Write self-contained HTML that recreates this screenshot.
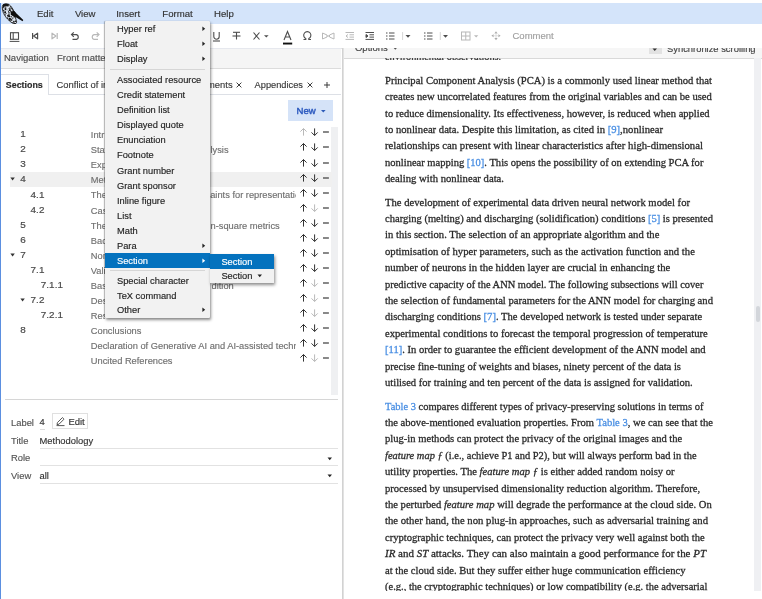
<!DOCTYPE html>
<html><head><meta charset="utf-8"><style>
html,body{margin:0;padding:0;width:762px;height:599px;overflow:hidden;background:#fff;position:relative}
body{will-change:transform}
.t{position:absolute;white-space:nowrap;font-family:'Liberation Sans', sans-serif;-webkit-text-stroke:0.15px currentColor}
.lk{color:#4a8fe3}
i.m{font-style:italic}
</style></head><body>
<div style="position:absolute;left:0px;top:0px;width:762px;height:3px;background:#fff"></div>
<div style="position:absolute;left:0px;top:3px;width:762px;height:20.5px;background:#d4e4fa"></div>
<div style="position:absolute;left:0px;top:3px;width:1.2px;height:596px;background:#5b8fe0"></div>
<svg style="position:absolute;left:0;top:0" width="30" height="26" viewBox="0 0 30 26">
<defs><clipPath id="bd"><path d="M3.2 4.6 C4.5 3.6 7.2 3.6 8.8 4.4 C10.8 5.8 12.6 8.2 13.6 10.6 L15.2 12.4 C14.6 14.5 15.2 17.5 16.2 20 C17 22 16.6 23.8 15 23.8 C13.2 23.8 10.8 22.2 9.2 20.6 C6.8 18.6 4.8 16 3.6 13.4 C2.5 11 2.1 8.4 2.3 6.6 C2.4 5.8 2.7 5.1 3.2 4.6 Z"/></clipPath></defs>
<path d="M3.2 4.6 C4.5 3.6 7.2 3.6 8.8 4.4 C10.8 5.8 12.6 8.2 13.6 10.6 L15.2 12.4 C14.6 14.5 15.2 17.5 16.2 20 C17 22 16.6 23.8 15 23.8 C13.2 23.8 10.8 22.2 9.2 20.6 C6.8 18.6 4.8 16 3.6 13.4 C2.5 11 2.1 8.4 2.3 6.6 C2.4 5.8 2.7 5.1 3.2 4.6 Z" fill="#dfe6f0" stroke="#1a1a1a" stroke-width="0.8"/>
<g clip-path="url(#bd)" fill="#111"><circle cx="8.8" cy="15.2" r="0.77"/><circle cx="9.0" cy="14.2" r="0.61"/><circle cx="5.1" cy="14.2" r="0.63"/><circle cx="13.6" cy="5.9" r="0.49"/><circle cx="3.8" cy="20.2" r="0.66"/><circle cx="3.1" cy="23.6" r="0.78"/><circle cx="11.7" cy="16.3" r="0.42"/><circle cx="2.7" cy="14.6" r="0.38"/><circle cx="5.2" cy="8.8" r="0.36"/><circle cx="9.0" cy="12.8" r="0.73"/><circle cx="9.8" cy="16.8" r="0.57"/><circle cx="11.8" cy="13.1" r="0.48"/><circle cx="16.5" cy="23.9" r="0.73"/><circle cx="12.4" cy="10.3" r="0.45"/><circle cx="6.5" cy="5.4" r="0.69"/><circle cx="8.1" cy="20.9" r="0.52"/><circle cx="15.9" cy="20.9" r="0.35"/><circle cx="5.4" cy="22.2" r="0.56"/><circle cx="16.2" cy="11.9" r="0.38"/><circle cx="11.3" cy="19.6" r="0.47"/><circle cx="3.7" cy="10.7" r="0.78"/><circle cx="13.1" cy="6.4" r="0.46"/><circle cx="3.9" cy="5.2" r="0.71"/><circle cx="5.0" cy="15.2" r="0.55"/><circle cx="5.2" cy="18.6" r="0.41"/><circle cx="11.5" cy="6.3" r="0.54"/><circle cx="5.5" cy="9.4" r="0.79"/><circle cx="13.7" cy="10.1" r="0.75"/><circle cx="5.4" cy="11.9" r="0.73"/><circle cx="11.5" cy="6.0" r="0.80"/><circle cx="5.5" cy="9.2" r="0.70"/><circle cx="7.1" cy="9.9" r="0.38"/><circle cx="3.8" cy="15.7" r="0.46"/><circle cx="10.9" cy="11.4" r="0.55"/><circle cx="15.9" cy="13.7" r="0.61"/><circle cx="14.6" cy="7.7" r="0.42"/><circle cx="15.2" cy="20.4" r="0.46"/><circle cx="5.2" cy="18.8" r="0.77"/><circle cx="5.3" cy="23.0" r="0.75"/><circle cx="10.9" cy="12.4" r="0.40"/><circle cx="3.0" cy="23.3" r="0.46"/><circle cx="12.4" cy="9.1" r="0.72"/><circle cx="10.9" cy="9.9" r="0.43"/><circle cx="12.6" cy="5.4" r="0.45"/><circle cx="10.3" cy="21.0" r="0.63"/><circle cx="6.4" cy="22.3" r="0.44"/><circle cx="2.7" cy="9.4" r="0.55"/><circle cx="3.3" cy="7.5" r="0.52"/><circle cx="10.5" cy="6.6" r="0.51"/><circle cx="15.0" cy="23.6" r="0.65"/><circle cx="12.2" cy="15.7" r="0.41"/><circle cx="3.0" cy="4.4" r="0.76"/><circle cx="12.3" cy="23.3" r="0.36"/><circle cx="11.4" cy="13.6" r="0.68"/><circle cx="7.0" cy="24.0" r="0.38"/><circle cx="10.1" cy="18.7" r="0.76"/><circle cx="12.8" cy="18.1" r="0.71"/><circle cx="15.3" cy="11.0" r="0.66"/><circle cx="15.1" cy="21.4" r="0.54"/><circle cx="13.6" cy="21.3" r="0.61"/><circle cx="11.2" cy="11.6" r="0.61"/><circle cx="11.0" cy="5.6" r="0.64"/><circle cx="16.4" cy="21.6" r="0.68"/><circle cx="7.9" cy="18.7" r="0.61"/><circle cx="8.7" cy="20.8" r="0.39"/><circle cx="13.0" cy="4.6" r="0.62"/><circle cx="9.2" cy="8.6" r="0.66"/><circle cx="9.5" cy="16.3" r="0.76"/><circle cx="6.1" cy="4.2" r="0.49"/><circle cx="12.0" cy="8.1" r="0.43"/><circle cx="15.2" cy="17.2" r="0.55"/><circle cx="15.0" cy="10.5" r="0.65"/><circle cx="5.3" cy="12.6" r="0.71"/><circle cx="15.3" cy="21.6" r="0.52"/><circle cx="10.7" cy="10.3" r="0.41"/><circle cx="9.5" cy="20.7" r="0.73"/><circle cx="12.5" cy="23.0" r="0.47"/><circle cx="4.9" cy="13.0" r="0.47"/><circle cx="5.5" cy="12.3" r="0.63"/><circle cx="9.4" cy="10.3" r="0.73"/><circle cx="16.2" cy="13.0" r="0.38"/><circle cx="2.9" cy="21.5" r="0.37"/><circle cx="12.4" cy="15.4" r="0.49"/><circle cx="13.6" cy="4.4" r="0.41"/><circle cx="8.9" cy="4.5" r="0.72"/><circle cx="5.8" cy="6.8" r="0.37"/><circle cx="11.3" cy="12.9" r="0.63"/><circle cx="11.7" cy="20.1" r="0.78"/><circle cx="12.1" cy="8.0" r="0.56"/><circle cx="5.0" cy="4.2" r="0.56"/><circle cx="12.5" cy="7.6" r="0.47"/><circle cx="7.3" cy="17.9" r="0.58"/><circle cx="11.1" cy="19.1" r="0.53"/><circle cx="13.6" cy="22.1" r="0.39"/><circle cx="15.6" cy="18.4" r="0.41"/><circle cx="8.8" cy="16.5" r="0.76"/><circle cx="7.8" cy="15.4" r="0.75"/><circle cx="13.7" cy="22.9" r="0.56"/><circle cx="11.6" cy="8.1" r="0.67"/><circle cx="14.0" cy="16.8" r="0.67"/><circle cx="5.5" cy="22.0" r="0.79"/><circle cx="16.2" cy="14.7" r="0.71"/><circle cx="7.0" cy="22.2" r="0.74"/><circle cx="7.4" cy="5.7" r="0.55"/><circle cx="10.2" cy="19.4" r="0.57"/><circle cx="2.9" cy="20.2" r="0.38"/><circle cx="13.7" cy="7.5" r="0.50"/><circle cx="13.5" cy="6.8" r="0.42"/><circle cx="9.7" cy="18.5" r="0.73"/><circle cx="12.2" cy="22.9" r="0.57"/><circle cx="15.8" cy="5.7" r="0.45"/><circle cx="9.9" cy="9.8" r="0.68"/><circle cx="11.4" cy="14.5" r="0.73"/><circle cx="10.3" cy="10.2" r="0.52"/><circle cx="14.3" cy="22.0" r="0.44"/><circle cx="14.4" cy="23.4" r="0.59"/><circle cx="10.5" cy="8.0" r="0.59"/><circle cx="9.5" cy="16.1" r="0.36"/><circle cx="16.1" cy="14.3" r="0.53"/><circle cx="13.7" cy="15.3" r="0.57"/><circle cx="12.2" cy="5.3" r="0.59"/><circle cx="8.3" cy="23.1" r="0.77"/><circle cx="6.3" cy="13.5" r="0.41"/><circle cx="8.6" cy="20.3" r="0.76"/><circle cx="9.2" cy="10.3" r="0.44"/><circle cx="11.2" cy="22.5" r="0.41"/><circle cx="13.4" cy="4.5" r="0.44"/><circle cx="5.7" cy="17.7" r="0.49"/><circle cx="7.5" cy="16.4" r="0.40"/><circle cx="12.7" cy="6.5" r="0.58"/><circle cx="6.0" cy="8.0" r="0.59"/><circle cx="8.6" cy="11.5" r="0.54"/><circle cx="9.9" cy="7.2" r="0.44"/><circle cx="11.3" cy="16.8" r="0.59"/><circle cx="14.4" cy="16.2" r="0.74"/><circle cx="5.8" cy="18.8" r="0.71"/><circle cx="15.1" cy="10.3" r="0.49"/><circle cx="15.4" cy="8.4" r="0.80"/><circle cx="14.9" cy="6.7" r="0.46"/><circle cx="12.7" cy="9.2" r="0.39"/><circle cx="14.2" cy="12.4" r="0.71"/><circle cx="4.3" cy="12.1" r="0.66"/><circle cx="2.7" cy="8.0" r="0.66"/><circle cx="15.3" cy="23.4" r="0.40"/><circle cx="9.6" cy="19.2" r="0.58"/><circle cx="12.1" cy="7.8" r="0.38"/><circle cx="4.0" cy="4.7" r="0.60"/><circle cx="9.7" cy="15.4" r="0.42"/><circle cx="5.1" cy="8.1" r="0.73"/><circle cx="16.4" cy="22.5" r="0.39"/></g>
<path d="M3.0 4.8 C4.4 3.6 7.4 3.6 8.9 4.5 L8.6 6.4 C6.8 5.9 4.8 6.4 2.8 7.6 C2.5 6.5 2.6 5.5 3.0 4.8 Z" fill="#151515"/>
<path d="M10.8 12.6 L13.4 10.4 L15.2 12.2 L23.3 20.0 L22.6 21.2 L15.5 17.0 L12.4 15.4 Z" fill="#0e0e0e"/>
</svg>
<div class="t " style="left:36.9px;top:6.55px;font-size:9.6px;line-height:13.44px;color:#333;font-weight:normal;font-family:'Liberation Sans', sans-serif;">Edit</div>
<div class="t " style="left:74.9px;top:6.55px;font-size:9.6px;line-height:13.44px;color:#333;font-weight:normal;font-family:'Liberation Sans', sans-serif;">View</div>
<div class="t " style="left:116.2px;top:6.55px;font-size:9.6px;line-height:13.44px;color:#333;font-weight:normal;font-family:'Liberation Sans', sans-serif;">Insert</div>
<div class="t " style="left:162.3px;top:6.55px;font-size:9.6px;line-height:13.44px;color:#333;font-weight:normal;font-family:'Liberation Sans', sans-serif;">Format</div>
<div class="t " style="left:214px;top:6.55px;font-size:9.6px;line-height:13.44px;color:#333;font-weight:normal;font-family:'Liberation Sans', sans-serif;">Help</div>
<div style="position:absolute;left:1.2px;top:23.5px;width:760.8px;height:24.5px;background:#fff"></div>
<div style="position:absolute;left:1.2px;top:47.5px;width:341px;height:0.8px;background:#e3e3e3"></div>

<svg style="position:absolute;left:0;top:24px" width="762" height="24" viewBox="0 24 762 24" fill="none" stroke-width="1.1">
<!-- sidebar toggle -->
<rect x="10.5" y="32.7" width="8" height="6.6" stroke="#4d4d4d"/>
<line x1="13.2" y1="32.7" x2="13.2" y2="39.3" stroke="#4d4d4d"/>
<line x1="9.6" y1="41.4" x2="19.4" y2="41.4" stroke="#4d4d4d" stroke-width="1"/>
<!-- first -->
<line x1="32.6" y1="33" x2="32.6" y2="39" stroke="#4d4d4d" stroke-width="1.2"/>
<path d="M37.6 33.2 L33.6 36 L37.6 38.8 Z" stroke="#4d4d4d" stroke-width="1.2" stroke-linejoin="round"/>
<!-- last (light) -->
<line x1="57.2" y1="33" x2="57.2" y2="39" stroke="#b8b8b8" stroke-width="1.2"/>
<path d="M52 33.2 L56 36 L52 38.8 Z" stroke="#b8b8b8" stroke-width="1.2" stroke-linejoin="round"/>
<!-- undo -->
<path d="M72 34.6 L76.5 34.6 A2.5 2.5 0 0 1 76.5 39.4 L72.5 39.4" stroke="#4d4d4d" stroke-width="1.2"/>
<path d="M73.8 32.3 L71.5 34.6 L73.8 36.9" stroke="#4d4d4d" stroke-width="1.2"/>
<!-- redo (light) -->
<path d="M98.5 34.6 L94 34.6 A2.5 2.5 0 0 0 94 39.4 L98 39.4" stroke="#b8b8b8" stroke-width="1.2"/>
<path d="M96.7 32.3 L99 34.6 L96.7 36.9" stroke="#b8b8b8" stroke-width="1.2"/>
<!-- underline U -->
<path d="M213.8 32 L213.8 36.5 A2.7 2.7 0 0 0 219.2 36.5 L219.2 32" stroke="#4d4d4d"/>
<line x1="213" y1="41" x2="220" y2="41" stroke="#4d4d4d"/>
<!-- strike -->
<line x1="233" y1="32.3" x2="240" y2="32.3" stroke="#4d4d4d"/>
<line x1="236.5" y1="32.3" x2="236.5" y2="39.5" stroke="#4d4d4d"/>
<line x1="232.5" y1="36" x2="240.5" y2="36" stroke="#4d4d4d"/>
<!-- X -->
<path d="M253.5 32.5 L259.5 39.5 M259.5 32.5 L253.5 39.5" stroke="#4d4d4d" stroke-width="1.1"/>
<path d="M264 35.3 L268.6 35.3 L266.3 37.6 Z" fill="#4d4d4d" stroke="none"/>
<!-- A color -->
<path d="M284 40 L287.5 31.5 L291 40 M285.3 37 L289.7 37" stroke="#4d4d4d" stroke-width="1.1"/>
<rect x="283" y="42.6" width="9.2" height="1.9" fill="#111" stroke="none"/>
<!-- Omega -->
<path d="M303.5 39.5 L305.8 39.5 L305.8 38.5 A3.6 3.6 0 1 1 308.8 38.5 L308.8 39.5 L311 39.5" stroke="#4d4d4d" stroke-width="1.1"/>
<!-- bowtie light -->
<path d="M322.5 33 L322.5 39 L327 37 L327 35 Z M334 33 L334 39 L329.5 37 L329.5 35 Z" stroke="#b8b8b8" stroke-width="1"/>
<line x1="327" y1="36" x2="329.5" y2="36" stroke="#b8b8b8"/>
<!-- outdent light -->
<g stroke="#b8b8b8" stroke-width="1"><line x1="345.5" y1="32.5" x2="354" y2="32.5"/><line x1="349.5" y1="34.8" x2="354" y2="34.8"/><line x1="349.5" y1="37.1" x2="354" y2="37.1"/><line x1="345.5" y1="39.4" x2="354" y2="39.4"/><path d="M348 34.5 L346 36 L348 37.5"/></g>
<!-- indent -->
<g stroke="#4d4d4d" stroke-width="1"><line x1="365.5" y1="32.5" x2="374" y2="32.5"/><line x1="369.5" y1="34.8" x2="374" y2="34.8"/><line x1="369.5" y1="37.1" x2="374" y2="37.1"/><line x1="365.5" y1="39.4" x2="374" y2="39.4"/><path d="M366 34.5 L368 36 L366 37.5 Z" fill="#4d4d4d"/></g>
<!-- bullet list -->
<g stroke="#4d4d4d" stroke-width="1"><line x1="386" y1="33" x2="387.5" y2="33"/><line x1="386" y1="36" x2="387.5" y2="36"/><line x1="386" y1="39" x2="387.5" y2="39"/><line x1="389" y1="33" x2="394.5" y2="33"/><line x1="389" y1="36" x2="394.5" y2="36"/><line x1="389" y1="39" x2="394.5" y2="39"/></g>
<line x1="402.6" y1="32" x2="402.6" y2="40" stroke="#ccc" stroke-width="0.8"/>
<path d="M405.5 35 L410.5 35 L408 37.8 Z" fill="#4d4d4d" stroke="none"/>
<!-- numbered list -->
<g stroke="#4d4d4d" stroke-width="1"><line x1="424" y1="33" x2="425.5" y2="33"/><line x1="424" y1="36" x2="425.5" y2="36"/><line x1="424" y1="39" x2="425.5" y2="39"/><line x1="427" y1="33" x2="432.5" y2="33"/><line x1="427" y1="36" x2="432.5" y2="36"/><line x1="427" y1="39" x2="432.5" y2="39"/></g>
<line x1="440.3" y1="32" x2="440.3" y2="40" stroke="#ccc" stroke-width="0.8"/>
<path d="M443 35 L448 35 L445.5 37.8 Z" fill="#4d4d4d" stroke="none"/>
<!-- table light -->
<g stroke="#b8b8b8" stroke-width="1"><rect x="461.5" y="32" width="8.5" height="8"/><line x1="465.75" y1="32" x2="465.75" y2="40"/><line x1="461.5" y1="36" x2="470" y2="36"/></g>
<path d="M474 35.3 L478.3 35.3 L476.15 37.5 Z" fill="#b8b8b8" stroke="none"/>
<!-- move light -->
<g fill="#a8a8a8" stroke="none"><path d="M496 31.2 L497.6 33.4 L494.4 33.4 Z"/><path d="M496 40.3 L497.6 38.1 L494.4 38.1 Z"/><path d="M491.4 35.75 L493.6 34.15 L493.6 37.35 Z"/><path d="M500.6 35.75 L498.4 34.15 L498.4 37.35 Z"/></g>
<g stroke="#d8d8d8" stroke-width="0.8"><line x1="493.5" y1="35.75" x2="498.5" y2="35.75"/><line x1="496" y1="33.3" x2="496" y2="38.2"/></g>
</svg>
<div class="t " style="left:512.5px;top:29.36px;font-size:9.5px;line-height:13.3px;color:#a0a0a0;font-weight:normal;font-family:'Liberation Sans', sans-serif;">Comment</div>
<div style="position:absolute;left:1.2px;top:48.0px;width:340px;height:21.0px;background:#f5f5f5;border-top:1px solid #e6e8ee;border-bottom:1px solid #dcdcdc;box-sizing:border-box"></div>
<div class="t " style="left:4px;top:51.06px;font-size:9.5px;line-height:13.3px;color:#4e4e4e;font-weight:normal;font-family:'Liberation Sans', sans-serif;">Navigation</div>
<div class="t " style="left:57.0px;top:51.06px;font-size:9.5px;line-height:13.3px;color:#4e4e4e;font-weight:normal;font-family:'Liberation Sans', sans-serif;">Front matter</div>
<div style="position:absolute;left:1.2px;top:94.0px;width:340px;height:0.9px;background:#dde0e6"></div>
<div style="position:absolute;left:1.2px;top:74.4px;width:47.6px;height:20.5px;background:#fff;border-top:0.9px solid #dde0e6;border-right:0.9px solid #dde0e6;box-sizing:border-box"></div>
<div class="t " style="left:5.8px;top:78.79px;font-size:8.9px;line-height:12.46px;color:#2a2a2a;font-weight:bold;font-family:'Liberation Sans', sans-serif;">Sections</div>
<div class="t " style="left:56.6px;top:77.96px;font-size:9.4px;line-height:13.16px;color:#3a3a3a;font-weight:normal;font-family:'Liberation Sans', sans-serif;">Conflict of interest</div>
<div class="t" style="left:100px;top:78.5px;width:132.6px;text-align:right;font-size:9.4px;line-height:12px;color:#3a3a3a">Acknowledgements</div>
<div class="t " style="left:254.6px;top:78.82px;font-size:9.25px;line-height:12.95px;color:#3a3a3a;font-weight:normal;font-family:'Liberation Sans', sans-serif;">Appendices</div>
<svg style="position:absolute;left:235.4px;top:80.6px" width="8" height="8"><path d="M1.6 1.6 L6.4 6.4 M6.4 1.6 L1.6 6.4" stroke="#333" stroke-width="0.95" fill="none"/></svg>
<svg style="position:absolute;left:305.8px;top:80.6px" width="8" height="8"><path d="M1.6 1.6 L6.4 6.4 M6.4 1.6 L1.6 6.4" stroke="#333" stroke-width="0.95" fill="none"/></svg>
<svg style="position:absolute;left:322.5px;top:80.5px" width="8" height="8"><path d="M4 1 L4 7 M1 4 L7 4" stroke="#333" stroke-width="0.95" fill="none"/></svg>
<div style="position:absolute;left:288px;top:100.2px;width:45.2px;height:21.3px;background:#d5e3f8"></div>
<div class="t " style="left:296.5px;top:104.05px;font-size:9.6px;line-height:13.44px;color:#2f5cc0;font-weight:normal;font-family:'Liberation Sans', sans-serif;-webkit-text-stroke:0.45px #2f5cc0">New</div>
<svg style="position:absolute;left:320px;top:109px" width="7" height="5"><path d="M1 1 L5.6 1 L3.3 3.6 Z" fill="#2d5bb8"/></svg>
<div style="position:absolute;left:331.2px;top:126.7px;width:7.2px;height:268.3px;background:#eff0f2"></div>
<div style="position:absolute;left:10px;top:172.1px;width:321.5px;height:14.7px;background:#f0f0f0"></div>
<div class="t " style="left:20.3px;top:127.24px;font-size:9.9px;line-height:13.86px;color:#4a4a4a;font-weight:normal;font-family:'Liberation Sans', sans-serif;-webkit-text-stroke:0.2px #4a4a4a;letter-spacing:0.1px">1</div>
<div class="t " style="left:90.8px;top:129.17px;font-size:9.3px;line-height:13.02px;color:#707070;font-weight:normal;font-family:'Liberation Sans', sans-serif;width:14px;overflow:hidden">Intr</div>
<svg style="position:absolute;left:298px;top:127.40px" width="34" height="10" fill="none" stroke-width="1.0">
<path d="M5.5 8.6 L5.5 1.6 M2.4 4.6 L5.5 1.5 L8.6 4.6" stroke="#b9b9b9"/>
<path d="M16.6 1.4 L16.6 8.4 M13.5 5.4 L16.6 8.5 L19.7 5.4" stroke="#333"/>
<line x1="25" y1="5" x2="30.9" y2="5" stroke="#3a3a3a" stroke-width="1.2"/></svg>
<div class="t " style="left:20.3px;top:142.31px;font-size:9.9px;line-height:13.86px;color:#4a4a4a;font-weight:normal;font-family:'Liberation Sans', sans-serif;-webkit-text-stroke:0.2px #4a4a4a;letter-spacing:0.1px">2</div>
<div class="t " style="left:90.8px;top:144.24px;font-size:9.3px;line-height:13.02px;color:#707070;font-weight:normal;font-family:'Liberation Sans', sans-serif;width:14px;overflow:hidden">Stat</div>
<div class="t " style="left:210.5px;top:144.24px;font-size:9.3px;line-height:13.02px;color:#707070;font-weight:normal;font-family:'Liberation Sans', sans-serif;width:85.5px;overflow:hidden">lysis</div>
<svg style="position:absolute;left:298px;top:142.47px" width="34" height="10" fill="none" stroke-width="1.0">
<path d="M5.5 8.6 L5.5 1.6 M2.4 4.6 L5.5 1.5 L8.6 4.6" stroke="#333"/>
<path d="M16.6 1.4 L16.6 8.4 M13.5 5.4 L16.6 8.5 L19.7 5.4" stroke="#333"/>
<line x1="25" y1="5" x2="30.9" y2="5" stroke="#3a3a3a" stroke-width="1.2"/></svg>
<div class="t " style="left:20.3px;top:157.38px;font-size:9.9px;line-height:13.86px;color:#4a4a4a;font-weight:normal;font-family:'Liberation Sans', sans-serif;-webkit-text-stroke:0.2px #4a4a4a;letter-spacing:0.1px">3</div>
<div class="t " style="left:90.8px;top:159.31px;font-size:9.3px;line-height:13.02px;color:#707070;font-weight:normal;font-family:'Liberation Sans', sans-serif;width:14px;overflow:hidden">Expe</div>
<svg style="position:absolute;left:298px;top:157.54px" width="34" height="10" fill="none" stroke-width="1.0">
<path d="M5.5 8.6 L5.5 1.6 M2.4 4.6 L5.5 1.5 L8.6 4.6" stroke="#333"/>
<path d="M16.6 1.4 L16.6 8.4 M13.5 5.4 L16.6 8.5 L19.7 5.4" stroke="#333"/>
<line x1="25" y1="5" x2="30.9" y2="5" stroke="#3a3a3a" stroke-width="1.2"/></svg>
<svg style="position:absolute;left:10.1px;top:177.4px" width="6" height="5"><path d="M0.4 0.6 L4.8 0.6 L2.6 3.4 Z" fill="#333"/></svg>
<div class="t " style="left:20.3px;top:172.45px;font-size:9.9px;line-height:13.86px;color:#4a4a4a;font-weight:normal;font-family:'Liberation Sans', sans-serif;-webkit-text-stroke:0.2px #4a4a4a;letter-spacing:0.1px">4</div>
<div class="t " style="left:90.8px;top:174.38px;font-size:9.3px;line-height:13.02px;color:#707070;font-weight:normal;font-family:'Liberation Sans', sans-serif;width:14px;overflow:hidden">Meth</div>
<svg style="position:absolute;left:298px;top:172.61px" width="34" height="10" fill="none" stroke-width="1.0">
<path d="M5.5 8.6 L5.5 1.6 M2.4 4.6 L5.5 1.5 L8.6 4.6" stroke="#333"/>
<path d="M16.6 1.4 L16.6 8.4 M13.5 5.4 L16.6 8.5 L19.7 5.4" stroke="#333"/>
<line x1="25" y1="5" x2="30.9" y2="5" stroke="#3a3a3a" stroke-width="1.2"/></svg>
<div class="t " style="left:30.5px;top:187.52px;font-size:9.9px;line-height:13.86px;color:#4a4a4a;font-weight:normal;font-family:'Liberation Sans', sans-serif;-webkit-text-stroke:0.2px #4a4a4a;letter-spacing:0.1px">4.1</div>
<div class="t " style="left:90.8px;top:189.45px;font-size:9.3px;line-height:13.02px;color:#707070;font-weight:normal;font-family:'Liberation Sans', sans-serif;width:14px;overflow:hidden">Theo</div>
<div class="t " style="left:210.2px;top:189.45px;font-size:9.3px;line-height:13.02px;color:#707070;font-weight:normal;font-family:'Liberation Sans', sans-serif;width:85.8px;overflow:hidden">aints for representation</div>
<svg style="position:absolute;left:298px;top:187.68px" width="34" height="10" fill="none" stroke-width="1.0">
<path d="M5.5 8.6 L5.5 1.6 M2.4 4.6 L5.5 1.5 L8.6 4.6" stroke="#333"/>
<path d="M16.6 1.4 L16.6 8.4 M13.5 5.4 L16.6 8.5 L19.7 5.4" stroke="#333"/>
<line x1="25" y1="5" x2="30.9" y2="5" stroke="#3a3a3a" stroke-width="1.2"/></svg>
<div class="t " style="left:30.5px;top:202.59px;font-size:9.9px;line-height:13.86px;color:#4a4a4a;font-weight:normal;font-family:'Liberation Sans', sans-serif;-webkit-text-stroke:0.2px #4a4a4a;letter-spacing:0.1px">4.2</div>
<div class="t " style="left:90.8px;top:204.52px;font-size:9.3px;line-height:13.02px;color:#707070;font-weight:normal;font-family:'Liberation Sans', sans-serif;width:14px;overflow:hidden">Case</div>
<svg style="position:absolute;left:298px;top:202.75px" width="34" height="10" fill="none" stroke-width="1.0">
<path d="M5.5 8.6 L5.5 1.6 M2.4 4.6 L5.5 1.5 L8.6 4.6" stroke="#333"/>
<path d="M16.6 1.4 L16.6 8.4 M13.5 5.4 L16.6 8.5 L19.7 5.4" stroke="#b9b9b9"/>
<line x1="25" y1="5" x2="30.9" y2="5" stroke="#3a3a3a" stroke-width="1.2"/></svg>
<div class="t " style="left:20.3px;top:217.66px;font-size:9.9px;line-height:13.86px;color:#4a4a4a;font-weight:normal;font-family:'Liberation Sans', sans-serif;-webkit-text-stroke:0.2px #4a4a4a;letter-spacing:0.1px">5</div>
<div class="t " style="left:90.8px;top:219.59px;font-size:9.3px;line-height:13.02px;color:#707070;font-weight:normal;font-family:'Liberation Sans', sans-serif;width:14px;overflow:hidden">The </div>
<div class="t " style="left:210.5px;top:219.59px;font-size:9.3px;line-height:13.02px;color:#707070;font-weight:normal;font-family:'Liberation Sans', sans-serif;width:85.5px;overflow:hidden">n-square metrics</div>
<svg style="position:absolute;left:298px;top:217.82px" width="34" height="10" fill="none" stroke-width="1.0">
<path d="M5.5 8.6 L5.5 1.6 M2.4 4.6 L5.5 1.5 L8.6 4.6" stroke="#333"/>
<path d="M16.6 1.4 L16.6 8.4 M13.5 5.4 L16.6 8.5 L19.7 5.4" stroke="#333"/>
<line x1="25" y1="5" x2="30.9" y2="5" stroke="#3a3a3a" stroke-width="1.2"/></svg>
<div class="t " style="left:20.3px;top:232.73px;font-size:9.9px;line-height:13.86px;color:#4a4a4a;font-weight:normal;font-family:'Liberation Sans', sans-serif;-webkit-text-stroke:0.2px #4a4a4a;letter-spacing:0.1px">6</div>
<div class="t " style="left:90.8px;top:234.66px;font-size:9.3px;line-height:13.02px;color:#707070;font-weight:normal;font-family:'Liberation Sans', sans-serif;width:14px;overflow:hidden">Back</div>
<svg style="position:absolute;left:298px;top:232.89px" width="34" height="10" fill="none" stroke-width="1.0">
<path d="M5.5 8.6 L5.5 1.6 M2.4 4.6 L5.5 1.5 L8.6 4.6" stroke="#333"/>
<path d="M16.6 1.4 L16.6 8.4 M13.5 5.4 L16.6 8.5 L19.7 5.4" stroke="#333"/>
<line x1="25" y1="5" x2="30.9" y2="5" stroke="#3a3a3a" stroke-width="1.2"/></svg>
<svg style="position:absolute;left:10.1px;top:252.8px" width="6" height="5"><path d="M0.4 0.6 L4.8 0.6 L2.6 3.4 Z" fill="#333"/></svg>
<div class="t " style="left:20.3px;top:247.80px;font-size:9.9px;line-height:13.86px;color:#4a4a4a;font-weight:normal;font-family:'Liberation Sans', sans-serif;-webkit-text-stroke:0.2px #4a4a4a;letter-spacing:0.1px">7</div>
<div class="t " style="left:90.8px;top:249.73px;font-size:9.3px;line-height:13.02px;color:#707070;font-weight:normal;font-family:'Liberation Sans', sans-serif;width:14px;overflow:hidden">Nonl</div>
<svg style="position:absolute;left:298px;top:247.96px" width="34" height="10" fill="none" stroke-width="1.0">
<path d="M5.5 8.6 L5.5 1.6 M2.4 4.6 L5.5 1.5 L8.6 4.6" stroke="#333"/>
<path d="M16.6 1.4 L16.6 8.4 M13.5 5.4 L16.6 8.5 L19.7 5.4" stroke="#333"/>
<line x1="25" y1="5" x2="30.9" y2="5" stroke="#3a3a3a" stroke-width="1.2"/></svg>
<div class="t " style="left:30.5px;top:262.87px;font-size:9.9px;line-height:13.86px;color:#4a4a4a;font-weight:normal;font-family:'Liberation Sans', sans-serif;-webkit-text-stroke:0.2px #4a4a4a;letter-spacing:0.1px">7.1</div>
<div class="t " style="left:90.8px;top:264.80px;font-size:9.3px;line-height:13.02px;color:#707070;font-weight:normal;font-family:'Liberation Sans', sans-serif;width:14px;overflow:hidden">Vali</div>
<svg style="position:absolute;left:298px;top:263.03px" width="34" height="10" fill="none" stroke-width="1.0">
<path d="M5.5 8.6 L5.5 1.6 M2.4 4.6 L5.5 1.5 L8.6 4.6" stroke="#333"/>
<path d="M16.6 1.4 L16.6 8.4 M13.5 5.4 L16.6 8.5 L19.7 5.4" stroke="#333"/>
<line x1="25" y1="5" x2="30.9" y2="5" stroke="#3a3a3a" stroke-width="1.2"/></svg>
<div class="t " style="left:40.7px;top:277.94px;font-size:9.9px;line-height:13.86px;color:#4a4a4a;font-weight:normal;font-family:'Liberation Sans', sans-serif;-webkit-text-stroke:0.2px #4a4a4a;letter-spacing:0.1px">7.1.1</div>
<div class="t " style="left:90.8px;top:279.87px;font-size:9.3px;line-height:13.02px;color:#707070;font-weight:normal;font-family:'Liberation Sans', sans-serif;width:14px;overflow:hidden">Base</div>
<div class="t " style="left:211.5px;top:279.87px;font-size:9.3px;line-height:13.02px;color:#707070;font-weight:normal;font-family:'Liberation Sans', sans-serif;width:84.5px;overflow:hidden">dition</div>
<svg style="position:absolute;left:298px;top:278.10px" width="34" height="10" fill="none" stroke-width="1.0">
<path d="M5.5 8.6 L5.5 1.6 M2.4 4.6 L5.5 1.5 L8.6 4.6" stroke="#333"/>
<path d="M16.6 1.4 L16.6 8.4 M13.5 5.4 L16.6 8.5 L19.7 5.4" stroke="#b9b9b9"/>
<line x1="25" y1="5" x2="30.9" y2="5" stroke="#3a3a3a" stroke-width="1.2"/></svg>
<svg style="position:absolute;left:20.3px;top:298.0px" width="6" height="5"><path d="M0.4 0.6 L4.8 0.6 L2.6 3.4 Z" fill="#333"/></svg>
<div class="t " style="left:30.5px;top:293.01px;font-size:9.9px;line-height:13.86px;color:#4a4a4a;font-weight:normal;font-family:'Liberation Sans', sans-serif;-webkit-text-stroke:0.2px #4a4a4a;letter-spacing:0.1px">7.2</div>
<div class="t " style="left:90.8px;top:294.94px;font-size:9.3px;line-height:13.02px;color:#707070;font-weight:normal;font-family:'Liberation Sans', sans-serif;width:14px;overflow:hidden">Desi</div>
<svg style="position:absolute;left:298px;top:293.17px" width="34" height="10" fill="none" stroke-width="1.0">
<path d="M5.5 8.6 L5.5 1.6 M2.4 4.6 L5.5 1.5 L8.6 4.6" stroke="#333"/>
<path d="M16.6 1.4 L16.6 8.4 M13.5 5.4 L16.6 8.5 L19.7 5.4" stroke="#b9b9b9"/>
<line x1="25" y1="5" x2="30.9" y2="5" stroke="#3a3a3a" stroke-width="1.2"/></svg>
<div class="t " style="left:40.7px;top:308.08px;font-size:9.9px;line-height:13.86px;color:#4a4a4a;font-weight:normal;font-family:'Liberation Sans', sans-serif;-webkit-text-stroke:0.2px #4a4a4a;letter-spacing:0.1px">7.2.1</div>
<div class="t " style="left:90.8px;top:310.01px;font-size:9.3px;line-height:13.02px;color:#707070;font-weight:normal;font-family:'Liberation Sans', sans-serif;width:14px;overflow:hidden">Resu</div>
<svg style="position:absolute;left:298px;top:308.24px" width="34" height="10" fill="none" stroke-width="1.0">
<path d="M5.5 8.6 L5.5 1.6 M2.4 4.6 L5.5 1.5 L8.6 4.6" stroke="#333"/>
<path d="M16.6 1.4 L16.6 8.4 M13.5 5.4 L16.6 8.5 L19.7 5.4" stroke="#b9b9b9"/>
<line x1="25" y1="5" x2="30.9" y2="5" stroke="#3a3a3a" stroke-width="1.2"/></svg>
<div class="t " style="left:20.3px;top:323.15px;font-size:9.9px;line-height:13.86px;color:#4a4a4a;font-weight:normal;font-family:'Liberation Sans', sans-serif;-webkit-text-stroke:0.2px #4a4a4a;letter-spacing:0.1px">8</div>
<div class="t " style="left:90.8px;top:325.08px;font-size:9.3px;line-height:13.02px;color:#707070;font-weight:normal;font-family:'Liberation Sans', sans-serif;width:205px;overflow:hidden">Conclusions</div>
<svg style="position:absolute;left:298px;top:323.31px" width="34" height="10" fill="none" stroke-width="1.0">
<path d="M5.5 8.6 L5.5 1.6 M2.4 4.6 L5.5 1.5 L8.6 4.6" stroke="#333"/>
<path d="M16.6 1.4 L16.6 8.4 M13.5 5.4 L16.6 8.5 L19.7 5.4" stroke="#333"/>
<line x1="25" y1="5" x2="30.9" y2="5" stroke="#3a3a3a" stroke-width="1.2"/></svg>
<div class="t " style="left:90.8px;top:340.15px;font-size:9.3px;line-height:13.02px;color:#707070;font-weight:normal;font-family:'Liberation Sans', sans-serif;width:205px;overflow:hidden">Declaration of Generative AI and AI-assisted technologies</div>
<svg style="position:absolute;left:298px;top:338.38px" width="34" height="10" fill="none" stroke-width="1.0">
<path d="M5.5 8.6 L5.5 1.6 M2.4 4.6 L5.5 1.5 L8.6 4.6" stroke="#333"/>
<path d="M16.6 1.4 L16.6 8.4 M13.5 5.4 L16.6 8.5 L19.7 5.4" stroke="#333"/>
<line x1="25" y1="5" x2="30.9" y2="5" stroke="#3a3a3a" stroke-width="1.2"/></svg>
<div class="t " style="left:90.8px;top:355.22px;font-size:9.3px;line-height:13.02px;color:#707070;font-weight:normal;font-family:'Liberation Sans', sans-serif;width:205px;overflow:hidden">Uncited References</div>
<svg style="position:absolute;left:298px;top:353.45px" width="34" height="10" fill="none" stroke-width="1.0">
<path d="M5.5 8.6 L5.5 1.6 M2.4 4.6 L5.5 1.5 L8.6 4.6" stroke="#333"/>
<path d="M16.6 1.4 L16.6 8.4 M13.5 5.4 L16.6 8.5 L19.7 5.4" stroke="#b9b9b9"/>
<line x1="25" y1="5" x2="30.9" y2="5" stroke="#3a3a3a" stroke-width="1.2"/></svg>
<div style="position:absolute;left:5.1px;top:399.2px;width:333.1px;height:1px;background:#d6d6d6"></div>
<div class="t " style="left:11px;top:416.46px;font-size:9.4px;line-height:13.16px;color:#555;font-weight:normal;font-family:'Liberation Sans', sans-serif;">Label</div>
<div class="t " style="left:39.5px;top:415.16px;font-size:9.4px;line-height:13.16px;color:#333;font-weight:normal;font-family:'Liberation Sans', sans-serif;">4</div>
<div style="position:absolute;left:39.5px;top:428.8px;width:5.5px;height:0.8px;background:#ddd"></div>
<div style="position:absolute;left:52.4px;top:413.2px;width:35.5px;height:16.2px;border:0.9px solid #e0e0e0;box-sizing:border-box;background:#fff"></div>
<svg style="position:absolute;left:55px;top:416px" width="11" height="11" fill="none" stroke="#444" stroke-width="0.9"><path d="M2 8.6 L2.4 6.6 L7.4 1.6 L9 3.2 L4 8.2 Z"/><line x1="1.5" y1="9.6" x2="9.5" y2="9.6"/></svg>
<div class="t " style="left:68.4px;top:414.86px;font-size:9.5px;line-height:13.3px;color:#333;font-weight:normal;font-family:'Liberation Sans', sans-serif;">Edit</div>
<div class="t " style="left:11px;top:433.56px;font-size:9.4px;line-height:13.16px;color:#555;font-weight:normal;font-family:'Liberation Sans', sans-serif;">Title</div>
<div class="t " style="left:39.5px;top:433.56px;font-size:9.4px;line-height:13.16px;color:#333;font-weight:normal;font-family:'Liberation Sans', sans-serif;">Methodology</div>
<div style="position:absolute;left:39.5px;top:447.6px;width:298.5px;height:0.8px;background:#e2e2e2"></div>
<div class="t " style="left:11px;top:451.16px;font-size:9.4px;line-height:13.16px;color:#555;font-weight:normal;font-family:'Liberation Sans', sans-serif;">Role</div>
<div style="position:absolute;left:39.5px;top:465.2px;width:298.5px;height:0.8px;background:#e2e2e2"></div>
<div class="t " style="left:11px;top:468.86px;font-size:9.4px;line-height:13.16px;color:#555;font-weight:normal;font-family:'Liberation Sans', sans-serif;">View</div>
<div class="t " style="left:39.5px;top:468.86px;font-size:9.4px;line-height:13.16px;color:#333;font-weight:normal;font-family:'Liberation Sans', sans-serif;">all</div>
<div style="position:absolute;left:39.5px;top:483px;width:298.5px;height:0.8px;background:#e2e2e2"></div>
<svg style="position:absolute;left:326.5px;top:456.6px" width="6" height="4"><path d="M0.5 0.5 L5 0.5 L2.75 3.2 Z" fill="#222"/></svg>
<svg style="position:absolute;left:326.5px;top:474.2px" width="6" height="4"><path d="M0.5 0.5 L5 0.5 L2.75 3.2 Z" fill="#222"/></svg>
<div style="position:absolute;left:342px;top:48px;width:2.2px;height:551px;background:linear-gradient(90deg,#d2d2d2 0,#d2d2d2 50%,#e2e2e2 50%,#e2e2e2 100%)"></div>
<div style="position:absolute;left:344.2px;top:48.0px;width:417.6px;height:542.7px;overflow:hidden;background:#fff">
<div style="position:absolute;left:0;top:-3px;width:418.6px;height:14.4px;background:#f6f6f6;border-bottom:1.1px solid #d9d9d9;box-sizing:border-box"></div>
<div class="t " style="left:10.800000000000011px;top:-6.64px;font-size:9.5px;line-height:13.3px;color:#444;font-weight:normal;font-family:'Liberation Sans', sans-serif;">Options</div>
<svg style="position:absolute;left:49.30000000000001px;top:-1.2000000000000028px" width="5" height="4"><path d="M0.3 0.5 L4.3 0.5 L2.3 2.8 Z" fill="#555"/></svg>
<div style="position:absolute;left:304.59999999999997px;top:-3.0px;width:13.2px;height:9.4px;background:#e2e2e2"></div>
<svg style="position:absolute;left:308.3px;top:-0.5px" width="6" height="4"><path d="M0.5 0.5 L5 0.5 L2.75 3 Z" fill="#333"/></svg>
<div class="t " style="left:322.8px;top:-6.04px;font-size:9.4px;line-height:13.16px;color:#444;font-weight:normal;font-family:'Liberation Sans', sans-serif;">Synchronize scrolling</div>
<div style="position:absolute;left:0;top:10.399999999999999px;width:418.6px;height:532.3000000000001px;overflow:hidden">
<div class="t " style="left:40.80000000000001px;top:-9.23px;font-size:11.4px;line-height:15.96px;color:#2e2e2e;font-weight:normal;font-family:'Liberation Serif', serif;-webkit-text-stroke:0.2px currentColor;transform:scaleX(0.9);transform-origin:0 0">environmental observations.</div>
<div class="t " style="left:40.400000000000034px;top:14.47px;font-size:11.4px;line-height:15.96px;color:#2a2a2a;font-weight:normal;font-family:'Liberation Serif', serif;-webkit-text-stroke:0.3px currentColor;transform:scaleX(0.9309);transform-origin:0 0">Principal Component Analysis (PCA) is a commonly used linear method that</div>
<div class="t " style="left:40.400000000000034px;top:30.87px;font-size:11.4px;line-height:15.96px;color:#2a2a2a;font-weight:normal;font-family:'Liberation Serif', serif;-webkit-text-stroke:0.3px currentColor;transform:scaleX(0.9303);transform-origin:0 0">creates new uncorrelated features from the original variables and can be used</div>
<div class="t " style="left:40.400000000000034px;top:47.27px;font-size:11.4px;line-height:15.96px;color:#2a2a2a;font-weight:normal;font-family:'Liberation Serif', serif;-webkit-text-stroke:0.3px currentColor;transform:scaleX(0.9232);transform-origin:0 0">to reduce dimensionality. Its effectiveness, however, is reduced when applied</div>
<div class="t " style="left:40.400000000000034px;top:63.67px;font-size:11.4px;line-height:15.96px;color:#2a2a2a;font-weight:normal;font-family:'Liberation Serif', serif;-webkit-text-stroke:0.3px currentColor;transform:scaleX(0.9348);transform-origin:0 0">to nonlinear data. Despite this limitation, as cited in <span class="lk">[9]</span>,nonlinear</div>
<div class="t " style="left:40.400000000000034px;top:80.07px;font-size:11.4px;line-height:15.96px;color:#2a2a2a;font-weight:normal;font-family:'Liberation Serif', serif;-webkit-text-stroke:0.3px currentColor;transform:scaleX(0.9385);transform-origin:0 0">relationships can present with linear characteristics after high-dimensional</div>
<div class="t " style="left:40.400000000000034px;top:96.47px;font-size:11.4px;line-height:15.96px;color:#2a2a2a;font-weight:normal;font-family:'Liberation Serif', serif;-webkit-text-stroke:0.3px currentColor;transform:scaleX(0.9238);transform-origin:0 0">nonlinear mapping <span class="lk">[10]</span>. This opens the possibility of on extending PCA for</div>
<div class="t " style="left:40.400000000000034px;top:112.87px;font-size:11.4px;line-height:15.96px;color:#2a2a2a;font-weight:normal;font-family:'Liberation Serif', serif;-webkit-text-stroke:0.3px currentColor;transform:scaleX(0.9359);transform-origin:0 0">dealing with nonlinear data.</div>
<div class="t " style="left:40.400000000000034px;top:136.27px;font-size:11.4px;line-height:15.96px;color:#2a2a2a;font-weight:normal;font-family:'Liberation Serif', serif;-webkit-text-stroke:0.3px currentColor;transform:scaleX(0.9335);transform-origin:0 0">The development of experimental data driven neural network model for</div>
<div class="t " style="left:40.400000000000034px;top:152.67px;font-size:11.4px;line-height:15.96px;color:#2a2a2a;font-weight:normal;font-family:'Liberation Serif', serif;-webkit-text-stroke:0.3px currentColor;transform:scaleX(0.9268);transform-origin:0 0">charging (melting) and discharging (solidification) conditions <span class="lk">[5]</span> is presented</div>
<div class="t " style="left:40.400000000000034px;top:169.07px;font-size:11.4px;line-height:15.96px;color:#2a2a2a;font-weight:normal;font-family:'Liberation Serif', serif;-webkit-text-stroke:0.3px currentColor;transform:scaleX(0.9344);transform-origin:0 0">in this section. The selection of an appropriate algorithm and the</div>
<div class="t " style="left:40.400000000000034px;top:185.47px;font-size:11.4px;line-height:15.96px;color:#2a2a2a;font-weight:normal;font-family:'Liberation Serif', serif;-webkit-text-stroke:0.3px currentColor;transform:scaleX(0.9357);transform-origin:0 0">optimisation of hyper parameters, such as the activation function and the</div>
<div class="t " style="left:40.400000000000034px;top:201.87px;font-size:11.4px;line-height:15.96px;color:#2a2a2a;font-weight:normal;font-family:'Liberation Serif', serif;-webkit-text-stroke:0.3px currentColor;transform:scaleX(0.9426);transform-origin:0 0">number of neurons in the hidden layer are crucial in enhancing the</div>
<div class="t " style="left:40.400000000000034px;top:218.27px;font-size:11.4px;line-height:15.96px;color:#2a2a2a;font-weight:normal;font-family:'Liberation Serif', serif;-webkit-text-stroke:0.3px currentColor;transform:scaleX(0.9147);transform-origin:0 0">predictive capacity of the ANN model. The following subsections will cover</div>
<div class="t " style="left:40.400000000000034px;top:234.67px;font-size:11.4px;line-height:15.96px;color:#2a2a2a;font-weight:normal;font-family:'Liberation Serif', serif;-webkit-text-stroke:0.3px currentColor;transform:scaleX(0.9339);transform-origin:0 0">the selection of fundamental parameters for the ANN model for charging and</div>
<div class="t " style="left:40.400000000000034px;top:251.07px;font-size:11.4px;line-height:15.96px;color:#2a2a2a;font-weight:normal;font-family:'Liberation Serif', serif;-webkit-text-stroke:0.3px currentColor;transform:scaleX(0.9293);transform-origin:0 0">discharging conditions <span class="lk">[7]</span>. The developed network is tested under separate</div>
<div class="t " style="left:40.400000000000034px;top:267.47px;font-size:11.4px;line-height:15.96px;color:#2a2a2a;font-weight:normal;font-family:'Liberation Serif', serif;-webkit-text-stroke:0.3px currentColor;transform:scaleX(0.9326);transform-origin:0 0">experimental conditions to forecast the temporal progression of temperature</div>
<div class="t " style="left:40.400000000000034px;top:283.87px;font-size:11.4px;line-height:15.96px;color:#2a2a2a;font-weight:normal;font-family:'Liberation Serif', serif;-webkit-text-stroke:0.3px currentColor;transform:scaleX(0.9290);transform-origin:0 0"><span class="lk">[11]</span>. In order to guarantee the efficient development of the ANN model and</div>
<div class="t " style="left:40.400000000000034px;top:300.27px;font-size:11.4px;line-height:15.96px;color:#2a2a2a;font-weight:normal;font-family:'Liberation Serif', serif;-webkit-text-stroke:0.3px currentColor;transform:scaleX(0.9302);transform-origin:0 0">precise fine-tuning of weights and biases, ninety percent of the data is</div>
<div class="t " style="left:40.400000000000034px;top:316.67px;font-size:11.4px;line-height:15.96px;color:#2a2a2a;font-weight:normal;font-family:'Liberation Serif', serif;-webkit-text-stroke:0.3px currentColor;transform:scaleX(0.9291);transform-origin:0 0">utilised for training and ten percent of the data is assigned for validation.</div>
<div class="t " style="left:40.400000000000034px;top:340.27px;font-size:11.4px;line-height:15.96px;color:#2a2a2a;font-weight:normal;font-family:'Liberation Serif', serif;-webkit-text-stroke:0.3px currentColor;transform:scaleX(0.9194);transform-origin:0 0"><span class="lk">Table 3</span> compares different types of privacy-preserving solutions in terms of</div>
<div class="t " style="left:40.400000000000034px;top:356.67px;font-size:11.4px;line-height:15.96px;color:#2a2a2a;font-weight:normal;font-family:'Liberation Serif', serif;-webkit-text-stroke:0.3px currentColor;transform:scaleX(0.9293);transform-origin:0 0">the above-mentioned evaluation properties. From <span class="lk">Table 3</span>, we can see that the</div>
<div class="t " style="left:40.400000000000034px;top:373.07px;font-size:11.4px;line-height:15.96px;color:#2a2a2a;font-weight:normal;font-family:'Liberation Serif', serif;-webkit-text-stroke:0.3px currentColor;transform:scaleX(0.9297);transform-origin:0 0">plug-in methods can protect the privacy of the original images and the</div>
<div class="t " style="left:40.400000000000034px;top:389.47px;font-size:11.4px;line-height:15.96px;color:#2a2a2a;font-weight:normal;font-family:'Liberation Serif', serif;-webkit-text-stroke:0.3px currentColor;transform:scaleX(0.9182);transform-origin:0 0"><i>feature map</i> <i class="m">ƒ</i> (i.e., achieve P1 and P2), but will always perform bad in the</div>
<div class="t " style="left:40.400000000000034px;top:405.87px;font-size:11.4px;line-height:15.96px;color:#2a2a2a;font-weight:normal;font-family:'Liberation Serif', serif;-webkit-text-stroke:0.3px currentColor;transform:scaleX(0.9303);transform-origin:0 0">utility properties. The <i>feature map</i> <i class="m">ƒ</i> is either added random noisy or</div>
<div class="t " style="left:40.400000000000034px;top:422.27px;font-size:11.4px;line-height:15.96px;color:#2a2a2a;font-weight:normal;font-family:'Liberation Serif', serif;-webkit-text-stroke:0.3px currentColor;transform:scaleX(0.9298);transform-origin:0 0">processed by unsupervised dimensionality reduction algorithm. Therefore,</div>
<div class="t " style="left:40.400000000000034px;top:438.67px;font-size:11.4px;line-height:15.96px;color:#2a2a2a;font-weight:normal;font-family:'Liberation Serif', serif;-webkit-text-stroke:0.3px currentColor;transform:scaleX(0.9311);transform-origin:0 0">the perturbed <i>feature map</i> will degrade the performance at the cloud side. On</div>
<div class="t " style="left:40.400000000000034px;top:455.07px;font-size:11.4px;line-height:15.96px;color:#2a2a2a;font-weight:normal;font-family:'Liberation Serif', serif;-webkit-text-stroke:0.3px currentColor;transform:scaleX(0.9394);transform-origin:0 0">the other hand, the non plug-in approaches, such as adversarial training and</div>
<div class="t " style="left:40.400000000000034px;top:471.47px;font-size:11.4px;line-height:15.96px;color:#2a2a2a;font-weight:normal;font-family:'Liberation Serif', serif;-webkit-text-stroke:0.3px currentColor;transform:scaleX(0.9262);transform-origin:0 0">cryptographic techniques, can protect the privacy very well against both the</div>
<div class="t " style="left:40.400000000000034px;top:487.87px;font-size:11.4px;line-height:15.96px;color:#2a2a2a;font-weight:normal;font-family:'Liberation Serif', serif;-webkit-text-stroke:0.3px currentColor;transform:scaleX(0.9615);transform-origin:0 0"><i class="m">IR</i> and <i class="m">ST</i> attacks. They can also maintain a good performance for the <i class="m">PT</i></div>
<div class="t " style="left:40.400000000000034px;top:504.27px;font-size:11.4px;line-height:15.96px;color:#2a2a2a;font-weight:normal;font-family:'Liberation Serif', serif;-webkit-text-stroke:0.3px currentColor;transform:scaleX(0.9281);transform-origin:0 0">at the cloud side. But they suffer either huge communication efficiency</div>
<div class="t " style="left:40.400000000000034px;top:520.67px;font-size:11.4px;line-height:15.96px;color:#2a2a2a;font-weight:normal;font-family:'Liberation Serif', serif;-webkit-text-stroke:0.3px currentColor;transform:scaleX(0.9213);transform-origin:0 0">(e.g., the cryptographic techniques) or low compatibility (e.g. the adversarial</div>
</div>
<div style="position:absolute;left:410.09999999999997px;top:10.399999999999999px;width:7.1px;height:532.3px;background:#eff0f3"></div>
<div style="position:absolute;left:412.09999999999997px;top:257.9px;width:3.6px;height:15.7px;background:#d3d6db;border-radius:2px"></div>
</div>
<div style="position:absolute;left:105px;top:21.0px;width:104.5px;height:296.8px;background:#f2f2f2;box-shadow:1px 2px 3px rgba(0,0,0,0.45), -0.5px 0 1px rgba(0,0,0,0.25);border-radius:1px"></div>
<div class="t " style="left:117px;top:22.77px;font-size:9.3px;line-height:13.02px;color:#242424;font-weight:normal;font-family:'Liberation Sans', sans-serif;">Hyper ref</div>
<svg style="position:absolute;left:201.5px;top:25.6px" width="4" height="6"><path d="M0.4 0.4 L3.2 2.7 L0.4 5 Z" fill="#242424"/></svg>
<div class="t " style="left:117px;top:37.77px;font-size:9.3px;line-height:13.02px;color:#242424;font-weight:normal;font-family:'Liberation Sans', sans-serif;">Float</div>
<svg style="position:absolute;left:201.5px;top:40.6px" width="4" height="6"><path d="M0.4 0.4 L3.2 2.7 L0.4 5 Z" fill="#242424"/></svg>
<div class="t " style="left:117px;top:53.27px;font-size:9.3px;line-height:13.02px;color:#242424;font-weight:normal;font-family:'Liberation Sans', sans-serif;">Display</div>
<svg style="position:absolute;left:201.5px;top:56.1px" width="4" height="6"><path d="M0.4 0.4 L3.2 2.7 L0.4 5 Z" fill="#242424"/></svg>
<div class="t " style="left:117px;top:74.17px;font-size:9.3px;line-height:13.02px;color:#242424;font-weight:normal;font-family:'Liberation Sans', sans-serif;">Associated resource</div>
<div class="t " style="left:117px;top:89.27px;font-size:9.3px;line-height:13.02px;color:#242424;font-weight:normal;font-family:'Liberation Sans', sans-serif;">Credit statement</div>
<div class="t " style="left:117px;top:104.27px;font-size:9.3px;line-height:13.02px;color:#242424;font-weight:normal;font-family:'Liberation Sans', sans-serif;">Definition list</div>
<div class="t " style="left:117px;top:119.37px;font-size:9.3px;line-height:13.02px;color:#242424;font-weight:normal;font-family:'Liberation Sans', sans-serif;">Displayed quote</div>
<div class="t " style="left:117px;top:134.37px;font-size:9.3px;line-height:13.02px;color:#242424;font-weight:normal;font-family:'Liberation Sans', sans-serif;">Enunciation</div>
<div class="t " style="left:117px;top:149.47px;font-size:9.3px;line-height:13.02px;color:#242424;font-weight:normal;font-family:'Liberation Sans', sans-serif;">Footnote</div>
<div class="t " style="left:117px;top:164.57px;font-size:9.3px;line-height:13.02px;color:#242424;font-weight:normal;font-family:'Liberation Sans', sans-serif;">Grant number</div>
<div class="t " style="left:117px;top:179.67px;font-size:9.3px;line-height:13.02px;color:#242424;font-weight:normal;font-family:'Liberation Sans', sans-serif;">Grant sponsor</div>
<div class="t " style="left:117px;top:194.77px;font-size:9.3px;line-height:13.02px;color:#242424;font-weight:normal;font-family:'Liberation Sans', sans-serif;">Inline figure</div>
<div class="t " style="left:117px;top:209.87px;font-size:9.3px;line-height:13.02px;color:#242424;font-weight:normal;font-family:'Liberation Sans', sans-serif;">List</div>
<div class="t " style="left:117px;top:224.87px;font-size:9.3px;line-height:13.02px;color:#242424;font-weight:normal;font-family:'Liberation Sans', sans-serif;">Math</div>
<div class="t " style="left:117px;top:239.97px;font-size:9.3px;line-height:13.02px;color:#242424;font-weight:normal;font-family:'Liberation Sans', sans-serif;">Para</div>
<svg style="position:absolute;left:201.5px;top:242.8px" width="4" height="6"><path d="M0.4 0.4 L3.2 2.7 L0.4 5 Z" fill="#242424"/></svg>
<div style="position:absolute;left:105px;top:253.2px;width:104.5px;height:15px;background:#0472be"></div>
<div class="t " style="left:117px;top:254.97px;font-size:9.3px;line-height:13.02px;color:#fff;font-weight:normal;font-family:'Liberation Sans', sans-serif;">Section</div>
<svg style="position:absolute;left:201.5px;top:257.8px" width="4" height="6"><path d="M0.4 0.4 L3.2 2.7 L0.4 5 Z" fill="#fff"/></svg>
<div class="t " style="left:117px;top:275.17px;font-size:9.3px;line-height:13.02px;color:#242424;font-weight:normal;font-family:'Liberation Sans', sans-serif;">Special character</div>
<div class="t " style="left:117px;top:290.27px;font-size:9.3px;line-height:13.02px;color:#242424;font-weight:normal;font-family:'Liberation Sans', sans-serif;">TeX command</div>
<div class="t " style="left:117px;top:304.37px;font-size:9.3px;line-height:13.02px;color:#242424;font-weight:normal;font-family:'Liberation Sans', sans-serif;">Other</div>
<svg style="position:absolute;left:201.5px;top:307.2px" width="4" height="6"><path d="M0.4 0.4 L3.2 2.7 L0.4 5 Z" fill="#242424"/></svg>
<div style="position:absolute;left:110.4px;top:69.0px;width:94.2px;height:0.9px;background:#d6d6d6"></div>
<div style="position:absolute;left:110.4px;top:270.2px;width:94.2px;height:0.9px;background:#d6d6d6"></div>
<div style="position:absolute;left:209.7px;top:253.7px;width:64.3px;height:29.2px;background:#f2f2f2;box-shadow:1px 2px 3px rgba(0,0,0,0.45)"></div>
<div style="position:absolute;left:210.2px;top:254.2px;width:63.4px;height:14.5px;background:#0472be"></div>
<div class="t " style="left:221.4px;top:255.87px;font-size:9.3px;line-height:13.02px;color:#fff;font-weight:normal;font-family:'Liberation Sans', sans-serif;">Section</div>
<div class="t " style="left:221.4px;top:269.57px;font-size:9.3px;line-height:13.02px;color:#242424;font-weight:normal;font-family:'Liberation Sans', sans-serif;">Section</div>
<svg style="position:absolute;left:257px;top:274px" width="6" height="4"><path d="M0.5 0.5 L5 0.5 L2.75 3.2 Z" fill="#222"/></svg>
</body></html>
